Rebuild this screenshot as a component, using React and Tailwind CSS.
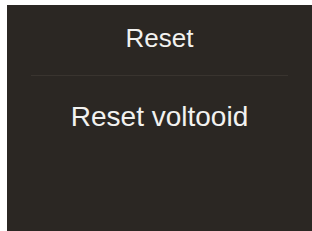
export default function App() {
  return (
    <div className="w-[312px] h-[231px] bg-white pl-[7px] pt-[5px] overflow-hidden" style={{ fontFamily: '"Liberation Sans", Arial, sans-serif' }}>
      <div className="h-full bg-[#2b2723] flex flex-col items-center text-[#f2f2f0]">
        <div className="mt-[20px] text-[26px] leading-none">Reset</div>
        <div className="mt-[24px] h-px w-[257px] bg-[#39342f]" />
        <div className="mt-[27px] text-[28px] leading-none">Reset voltooid</div>
      </div>
    </div>
  );
}
